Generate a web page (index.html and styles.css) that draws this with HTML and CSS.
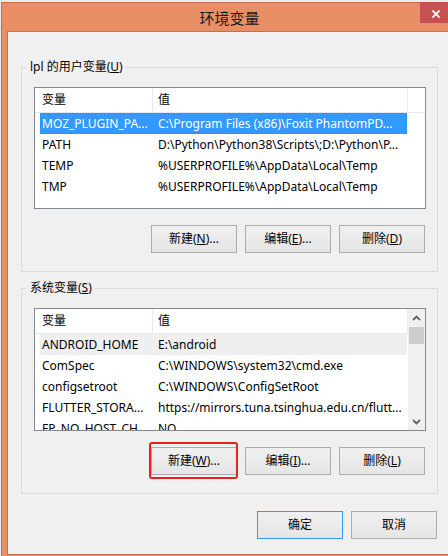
FILE: index.html
```html
<!DOCTYPE html>
<html lang="zh-CN">
<head>
<meta charset="utf-8">
<title>环境变量</title>
<link rel="stylesheet" href="styles.css">
</head>
<body>
<div class="window">
  <div class="titlebar">
    <span class="title">环境变量</span>
    <button class="close" aria-label="关闭"><svg width="8" height="8" viewBox="0 0 8 8"><path d="M0.5 0.5L7.5 7.5M7.5 0.5L0.5 7.5" stroke="#fff" stroke-width="1.7" fill="none"/></svg></button>
  </div>
  <div class="client">
    <fieldset class="group group-user">
      <legend>lpl 的用户变量(<u>U</u>)</legend>
      <div class="list">
        <div class="view">
          <div class="header"><div class="hcell h1">变量</div><div class="hcell h2">值</div></div>
          <div class="row selected"><span class="c1">MOZ_PLUGIN_PA...</span><span class="c2">C:\Program Files (x86)\Foxit PhantomPD...</span></div>
          <div class="row"><span class="c1">PATH</span><span class="c2">D:\Python\Python38\Scripts\;D:\Python\P...</span></div>
          <div class="row"><span class="c1">TEMP</span><span class="c2">%USERPROFILE%\AppData\Local\Temp</span></div>
          <div class="row"><span class="c1">TMP</span><span class="c2">%USERPROFILE%\AppData\Local\Temp</span></div>
        </div>
      </div>
      <div class="buttons">
        <button class="btn">新建(<u>N</u>)...</button>
        <button class="btn">编辑(<u>E</u>)...</button>
        <button class="btn">删除(<u>D</u>)</button>
      </div>
    </fieldset>
    <fieldset class="group group-system">
      <legend>系统变量(<u>S</u>)</legend>
      <div class="list list-tall">
        <div class="view">
          <div class="header"><div class="hcell h1">变量</div><div class="hcell h2">值</div></div>
          <div class="row inactive"><span class="c1">ANDROID_HOME</span><span class="c2">E:\android</span></div>
          <div class="row"><span class="c1">ComSpec</span><span class="c2">C:\WINDOWS\system32\cmd.exe</span></div>
          <div class="row"><span class="c1">configsetroot</span><span class="c2">C:\WINDOWS\ConfigSetRoot</span></div>
          <div class="row"><span class="c1">FLUTTER_STORA...</span><span class="c2">https://mirrors.tuna.tsinghua.edu.cn/flutt...</span></div>
          <div class="row"><span class="c1">FP_NO_HOST_CH...</span><span class="c2">NO</span></div>
        </div>
        <div class="vscroll">
          <div class="arrow"><svg width="9" height="6" viewBox="0 0 9 6"><path d="M1 5L4.5 1.5L8 5" stroke="#606060" stroke-width="1.8" fill="none"/></svg></div>
          <div class="thumb"></div>
          <div class="track"></div>
          <div class="arrow"><svg width="9" height="6" viewBox="0 0 9 6"><path d="M1 1L4.5 4.5L8 1" stroke="#606060" stroke-width="1.8" fill="none"/></svg></div>
        </div>
      </div>
      <div class="buttons">
        <button class="btn highlight">新建(<u>W</u>)...</button>
        <button class="btn">编辑(<u>I</u>)...</button>
        <button class="btn">删除(<u>L</u>)</button>
      </div>
    </fieldset>
    <div class="dialog-buttons">
      <button class="btn default">确定</button>
      <button class="btn">取消</button>
    </div>
  </div>
</div>
</body>
</html>
```

FILE: styles.css
```css
html, body {
  margin: 0;
  padding: 0;
}
body {
  background: #EBEBEB;
  overflow: hidden;
  font-family: "Noto Sans", "Noto Sans CJK SC", sans-serif;
  font-size: 12px;
  color: #000;
}
.window {
  position: relative;
  width: 457px;
  margin: 2px 0 0 1px;
  border: 1px solid #C0714D;
  background: #E98F66;
  box-sizing: border-box;
  padding-bottom: 7px;
}
.titlebar {
  height: 28px;
  display: flex;
  align-items: center;
  justify-content: center;
}
.title {
  font-family: "Noto Sans CJK SC", sans-serif;
  font-size: 15px;
  line-height: 20px;
  color: #1A1A1A;
  padding-top: 1px;
}
.close {
  position: absolute;
  top: -1px;
  left: 418px;
  width: 31px;
  height: 21px;
  border: 0;
  padding: 2px 0 0 0;
  margin: 0;
  background: #C75050;
  display: flex;
  align-items: center;
  justify-content: center;
}
.close svg { display: block; }
.client {
  margin: 0 5px;
  border: 1px solid #C0714D;
  background: #F0F0F0;
  padding: 0 13px 15px 13px;
}
.group {
  margin: 26px 0 0 0;
  padding: 0 11px 18px 12px;
  border: 1px solid #DCDCDC;
  min-width: 0;
}
.group-system {
  margin-top: 7px;
}
.group legend {
  margin-left: -8px;
  padding: 0 2px 0 4px;
  line-height: 18px;
  height: 18px;
}
.list {
  margin-top: 11px;
  height: 122px;
  box-sizing: border-box;
  border: 1px solid #828790;
  background: #FFFFFF;
  display: flex;
  overflow: hidden;
}
.list-tall {
  height: 123px;
}
.view {
  flex: 1;
  min-width: 0;
  overflow: hidden;
  font-size: 12px;
}
.header {
  height: 25px;
  box-sizing: border-box;
  border-bottom: 1px solid #E3EAF3;
  display: flex;
}
.hcell {
  box-sizing: border-box;
  border-right: 1px solid #E3EAF3;
  line-height: 24px;
  white-space: nowrap;
}
.h1 {
  width: 118px;
  padding-left: 7px;
}
.h2 {
  width: 255px;
  padding-left: 5px;
}
.row {
  display: flex;
  height: 21px;
  line-height: 21px;
  width: 367px;
  margin-left: 5px;
  white-space: nowrap;
}
.c1 {
  width: 112px;
  box-sizing: border-box;
  padding-left: 2px;
  overflow: hidden;
}
.c2 {
  width: 255px;
  box-sizing: border-box;
  padding-left: 6px;
  overflow: hidden;
}
.row.selected {
  background: #3399FF;
  color: #FFFFFF;
  outline: 1px dotted #CC6600;
  outline-offset: -1px;
}
.row.inactive {
  background: #EFEFEF;
}
.vscroll {
  width: 17px;
  flex: none;
  background: #F0F0F0;
  display: flex;
  flex-direction: column;
}
.arrow {
  height: 17px;
  display: flex;
  align-items: center;
  justify-content: center;
}
.arrow svg { display: block; }
.thumb {
  height: 17px;
  margin: 1px 1px 0 1px;
  background: #CDCDCD;
}
.track {
  flex: 1;
}
.buttons {
  margin-top: 16px;
  margin-right: 1px;
  display: flex;
  justify-content: flex-end;
  gap: 8px;
}
.btn {
  position: relative;
  width: 86px;
  height: 28px;
  box-sizing: border-box;
  border: 1px solid #ACACAC;
  background: linear-gradient(#F0F0F0, #E5E5E5);
  font-family: "Noto Sans", "Noto Sans CJK SC", sans-serif;
  font-size: 12px;
  color: #000;
  padding: 0;
  margin: 0;
  line-height: 26px;
}
.btn.default {
  border-color: #3399FF;
}
.btn.highlight::after {
  content: "";
  position: absolute;
  top: -6px;
  left: -3px;
  right: -2px;
  bottom: -5px;
  border: 2px solid #E8211A;
  border-radius: 3px;
}
.dialog-buttons {
  margin-top: 17px;
  margin-right: 1px;
  display: flex;
  justify-content: flex-end;
  gap: 8px;
}
```
